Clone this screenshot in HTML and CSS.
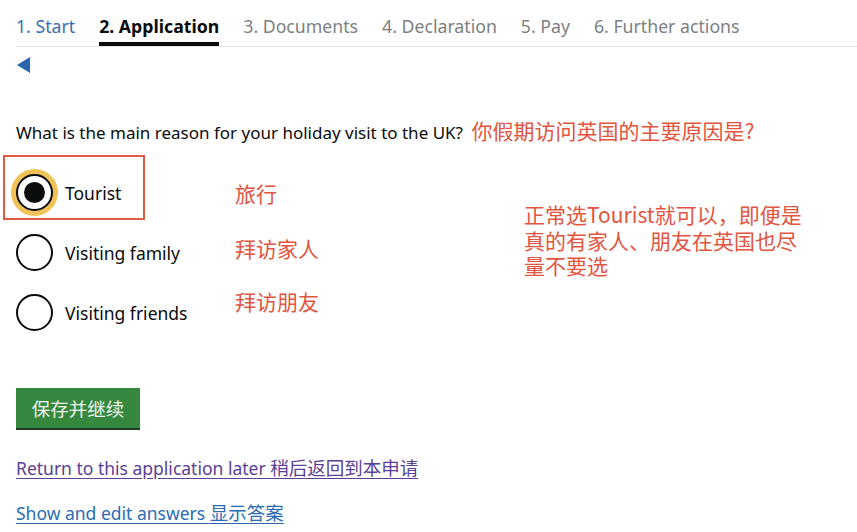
FILE: index.html
```html
<!DOCTYPE html>
<html lang="en">
<head>
<meta charset="utf-8">
<title>Application</title>
<link rel="stylesheet" href="styles.css">
</head>
<body>
<nav class="steps">
  <span class="step done">1. Start</span>
  <span class="step active">2. Application</span>
  <span class="step">3. Documents</span>
  <span class="step">4. Declaration</span>
  <span class="step">5. Pay</span>
  <span class="step">6. Further actions</span>
</nav>
<a class="back" href="#"><span class="tri"></span></a>
<p class="question">What is the main reason for your holiday visit to the UK? <span class="ann">你假期访问英国的主要原因是?</span></p>
<div class="options">
  <label class="opt checked"><span class="radio"></span><span class="lbl">Tourist</span></label>
  <span class="ann o1">旅行</span>
  <label class="opt"><span class="radio"></span><span class="lbl">Visiting family</span></label>
  <span class="ann o2">拜访家人</span>
  <label class="opt"><span class="radio"></span><span class="lbl">Visiting friends</span></label>
  <span class="ann o3">拜访朋友</span>
  <p class="ann note">正常选Tourist就可以，即便是<br>真的有家人、朋友在英国也尽<br>量不要选</p>
</div>
<button class="btn">保存并继续</button>
<p class="links"><a class="visited" href="#">Return to this application later <span class="zh">稍后返回到本申请</span></a></p>
<p class="links second"><a href="#">Show and edit answers <span class="zh">显示答案</span></a></p>
</body>
</html>
```
FILE: styles.css
```css
body {
  margin: 0;
  padding: 0 0 0 16px;
  font-family: "Noto Sans", "Noto Sans CJK SC", sans-serif;
  color: #0b0c0c;
  background: #fff;
  font-size: 17px;
}
.steps {
  display: flex;
  gap: 24px;
  padding-top: 15px;
  border-bottom: 1px solid #e4e6e7;
}
.step {
  font-size: 17.7px;
  line-height: 22px;
  padding-bottom: 5px;
  border-bottom: 4px solid transparent;
  color: #7b7f81;
}
.step.done { color: #3d6fae; }
.step.active {
  color: #0b0c0c;
  font-weight: 700;
  border-bottom-color: #0b0c0c;
}
.back {
  display: block;
  width: 16px;
  height: 16px;
  margin-top: 10px;
}
.tri {
  display: block;
  width: 0;
  height: 0;
  margin-left: 1px;
  border-top: 8px solid transparent;
  border-bottom: 8px solid transparent;
  border-right: 13px solid #2a66b0;
}
.question {
  margin: 45px 0 0;
  line-height: 24px;
}
.ann {
  color: #e25540;
  font-family: "Noto Sans CJK SC", "Noto Sans", sans-serif;
  font-size: 21px;
}
.question .ann { margin-left: 4px; }
.options {
  display: grid;
  grid-template-columns: 219px 289px auto;
  grid-template-rows: 60px 60px 60px;
  margin-top: 16px;
}
.opt {
  grid-column: 1;
  display: flex;
  align-items: center;
  gap: 12px;
  position: relative;
}
.opt.checked::before {
  content: "";
  position: absolute;
  left: -13px;
  top: -6px;
  width: 138px;
  height: 61px;
  border: 2px solid #e05a44;
}
.radio {
  width: 33px;
  height: 33px;
  border: 2px solid #0b0c0c;
  border-radius: 50%;
  box-sizing: content-box;
  background: #fff;
  flex: none;
  position: relative;
  top: 1px;
}
.checked .radio {
  box-shadow: 0 0 0 5px #f0c257;
}
.checked .radio::after {
  content: "";
  position: absolute;
  left: 6px;
  top: 6px;
  width: 21px;
  height: 21px;
  border-radius: 50%;
  background: #0b0c0c;
}
.lbl {
  font-size: 17.5px;
  position: relative;
  top: 2px;
}
.o1, .o2, .o3 {
  grid-column: 2;
  align-self: center;
}
.o1 { grid-row: 1; margin-top: 4px; }
.o2 { grid-row: 2; margin-top: -7px; }
.o3 { grid-row: 3; margin-top: -20px; }
.note {
  grid-column: 3;
  grid-row: 1 / 4;
  margin: 41px 0 0;
  line-height: 25.5px;
}
.btn {
  display: block;
  margin-top: 47px;
  width: 124px;
  height: 40px;
  border: 0;
  box-shadow: 0 2px 0 #1e3d22;
  background: #36883f;
  color: #eef5ee;
  font-family: "Noto Sans CJK SC", sans-serif;
  font-size: 18.5px;
  padding: 0;
}
.links {
  margin: 28px 0 0;
  line-height: 24px;
  font-size: 17.5px;
}
.links.second { margin-top: 21px; }
.links a {
  color: #2a6cb4;
  text-decoration: underline;
  text-underline-offset: 3px;
}
.links .zh { font-size: 18.5px; }
.links a.visited { color: #5a4096; }
```
